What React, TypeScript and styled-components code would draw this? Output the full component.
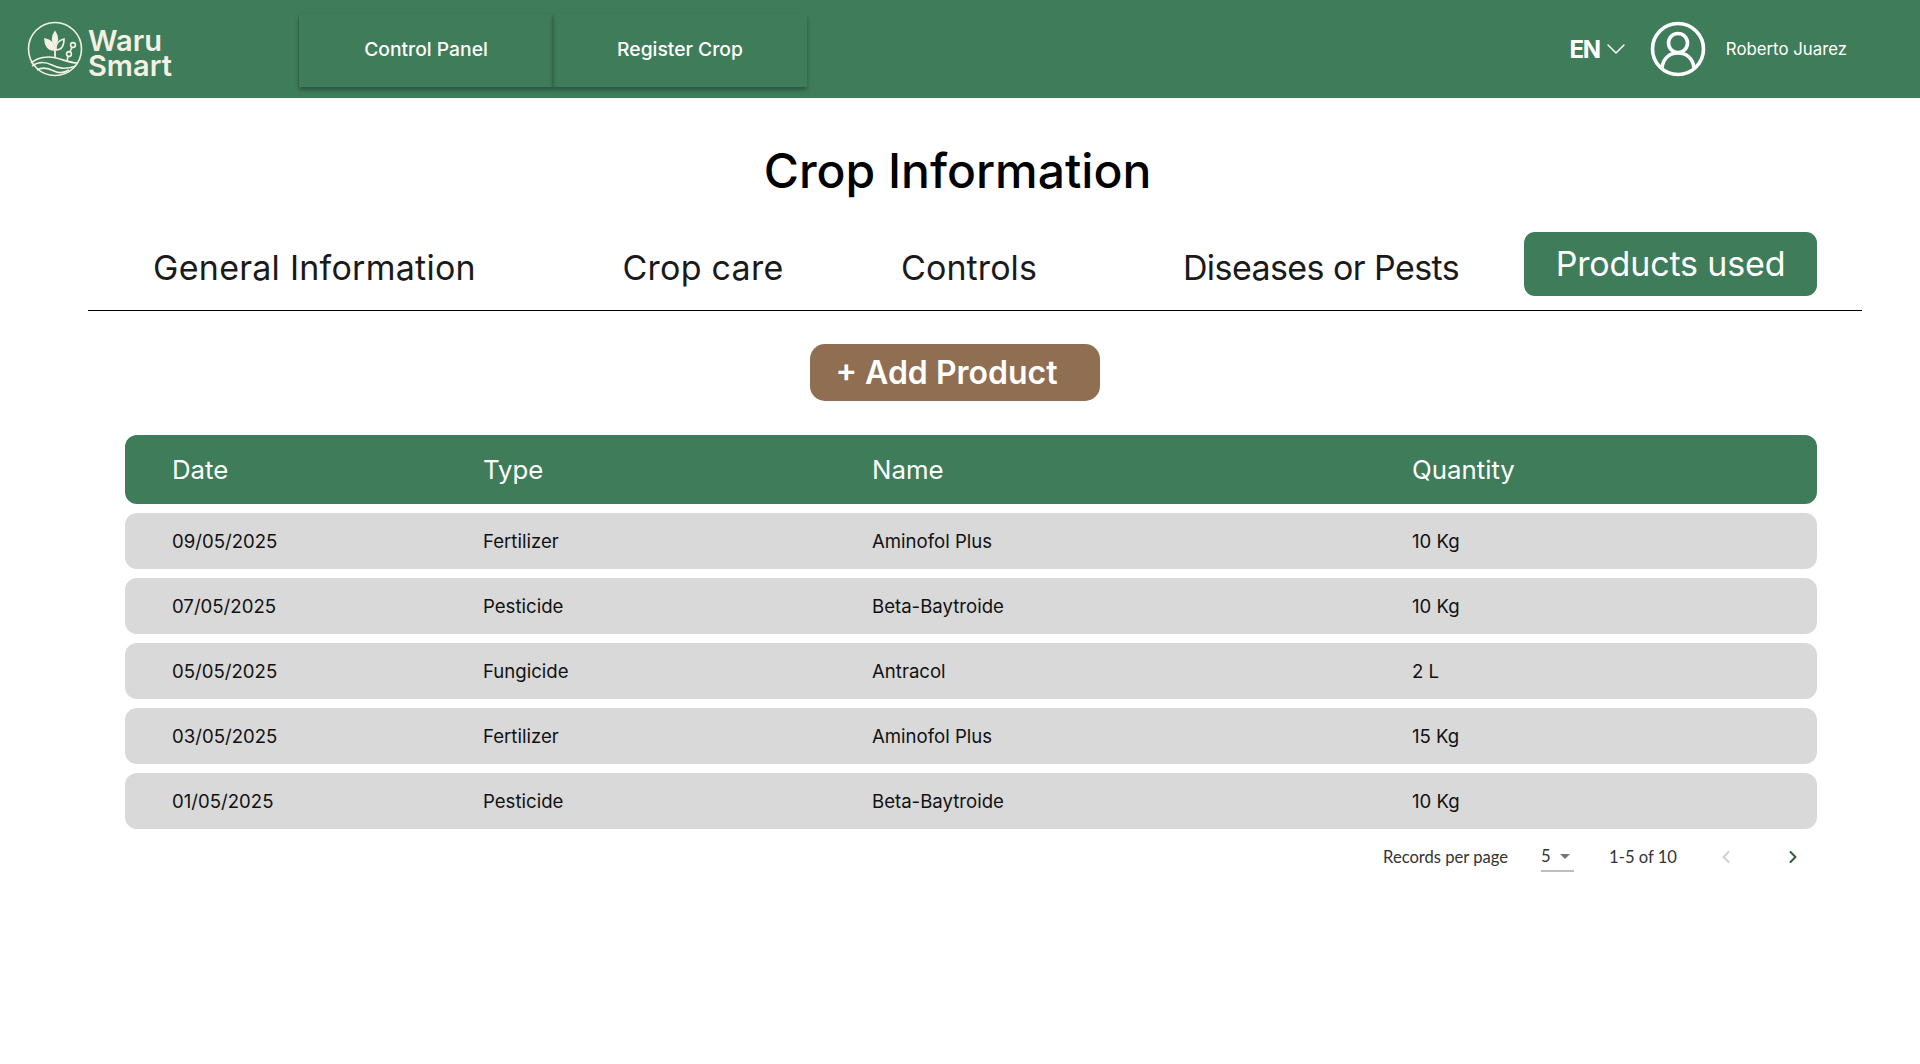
import React from "react";
import styled, { createGlobalStyle } from "styled-components";
import { ChevronDown, ChevronLeft, ChevronRight } from "lucide-react";

const GlobalStyle = createGlobalStyle`
  html, body {
    margin: 0;
    padding: 0;
    background: #fff;
    font-family: "Inter", "Liberation Sans", sans-serif;
  }
  * { box-sizing: border-box; }
`;

const Page = styled.div`
  width: 1920px;
  height: 1064px;
  background: #fff;
  overflow: hidden;
`;

const TopBar = styled.header`
  height: 98px;
  background: #3f7c5a;
  display: flex;
  align-items: flex-start;
  padding-left: 26px;
`;

const Brand = styled.div`
  width: 273px;
  height: 98px;
  display: flex;
  align-items: center;
  gap: 4px;
  color: #f3f0e4;
`;

const BrandName = styled.div`
  font-size: 29px;
  font-weight: 600;
  line-height: 25px;
  margin-top: 7px;
`;

const Nav = styled.nav`
  display: flex;
  margin-top: 14px;
`;

const NavItem = styled.a`
  width: 254px;
  height: 73px;
  padding-bottom: 4px;
  display: flex;
  align-items: center;
  justify-content: center;
  color: #fff;
  font-size: 19.300px;
  font-weight: 500;
  box-shadow: 0 3px 4px rgba(0, 0, 0, 0.3), -1px 0 1px rgba(0, 0, 0, 0.06);
`;

const UserArea = styled.div`
  margin-left: auto;
  height: 98px;
  display: flex;
  align-items: center;
  padding-right: 73px;
  color: #fff;
`;

const Lang = styled.div`
  display: flex;
  align-items: center;
  font-size: 24px;
  font-weight: 700;
  letter-spacing: -1.2px;
  margin-right: 18px;
`;

const UserName = styled.span`
  margin-left: 20px;
  font-size: 16.800px;
  font-weight: 400;
`;

const Main = styled.main`
  padding: 0 58px 0 88px;
`;

const Title = styled.h1`
  margin: 44px 0 0;
  padding-right: 35px;
  height: 58px;
  text-align: center;
  color: #000;
  font-size: 48px;
  line-height: 58px;
  font-weight: 500;
`;

const Tabs = styled.div`
  margin-top: 32px;
  height: 79px;
  display: flex;
  align-items: flex-start;
  border-bottom: 1px solid #000;
`;

const Tab = styled.div<{ $width: number; $gap?: number; $tracking?: number; $active?: boolean }>`
  width: ${(p) => p.$width}px;
  height: 64px;
  padding-bottom: 1px;
  margin-top: ${(p) => (p.$active ? 0 : 4)}px;
  margin-left: ${(p) => p.$gap ?? 0}px;
  display: flex;
  align-items: center;
  justify-content: center;
  border-radius: 11px;
  font-size: 34px;
  letter-spacing: ${(p) => p.$tracking ?? 0.25}px;
  background: ${(p) => (p.$active ? "#3f7c5a" : "transparent")};
  color: ${(p) => (p.$active ? "#fff" : "#1a1a1a")};
`;

const AddRow = styled.div`
  display: flex;
  justify-content: center;
  margin-top: 33px;
  padding-right: 41px;
`;

const AddButton = styled.button`
  width: 290px;
  height: 57px;
  padding: 0 0 0 26px;
  border: 0;
  border-radius: 15px;
  background: #8f6e52;
  color: #fff;
  font-family: "Inter", sans-serif;
  font-size: 32px;
  font-weight: 600;
  text-align: left;
`;

const TableWrap = styled.div`
  margin: 34px 45px 0 37px;
  display: flex;
  flex-direction: column;
  gap: 9px;
`;

const Columns = styled.div`
  display: grid;
  grid-template-columns: 311px 389px 540px 1fr;
  align-items: center;
  padding-left: 47px;
`;

const HeadRow = styled(Columns)`
  height: 69px;
  border-radius: 12px;
  background: #3f7c5a;
  color: #fff;
  font-size: 25.800px;
`;

const BodyRow = styled(Columns)`
  height: 56px;
  padding-bottom: 1px;
  border-radius: 12px;
  background: #d9d9d9;
  color: #111;
  font-size: 18.600px;
`;

const Pager = styled.div`
  margin: 13px 45px 0 0;
  height: 30px;
  display: flex;
  align-items: center;
  justify-content: flex-end;
  color: #333;
  font-family: "Lato", sans-serif;
  font-size: 16.600px;
`;

const PerPage = styled.div`
  width: 33px;
  height: 30px;
  margin: 0 35px 0 33px;
  display: flex;
  align-items: center;
  justify-content: space-between;
  padding-right: 4px;
  border-bottom: 2px solid #bdbdbd;
`;

const Caret = styled.span`
  width: 0;
  height: 0;
  border-left: 5px solid transparent;
  border-right: 5px solid transparent;
  border-top: 5px solid #777;
`;

const PagerButtons = styled.div`
  display: flex;
  align-items: center;
  gap: 47px;
  margin-left: 39px;
  margin-right: 14px;
`;

const rows = [
  ["09/05/2025", "Fertilizer", "Aminofol Plus", "10 Kg"],
  ["07/05/2025", "Pesticide", "Beta-Baytroide", "10 Kg"],
  ["05/05/2025", "Fungicide", "Antracol", "2 L"],
  ["03/05/2025", "Fertilizer", "Aminofol Plus", "15 Kg"],
  ["01/05/2025", "Pesticide", "Beta-Baytroide", "10 Kg"],
];

const Logo = () => (
  <svg width="58" height="58" viewBox="0 0 58 58" fill="none" stroke="#f3f0e4" strokeWidth="1.6">
    <circle cx="29" cy="29" r="26.500" />
    <path d="M5 43c7-6 17-7 25-5s15 5 21 5" />
    <path d="M6 46c7-5 14-4 20-1s12 5 24 1" />
    <path d="M11 50c5-3 11-2 17 1s10 2 15-1" />
    <path d="M29 37V20" strokeWidth="1.800" />
    <path d="M29 24c-3-2-3.500-7 0-12 3.500 5 3 10 0 12z" fill="#f3f0e4" />
    <path d="M28 30c-6 0-9-5-9-11 6 1 10 5 9 11z" fill="#f3f0e4" />
    <path d="M30 30c6 0 8-5 8-11-5 1-9 5-8 11z" />
    <circle cx="47" cy="25" r="2.400" />
    <circle cx="43" cy="34" r="2.400" />
    <path d="M46 27.500l-2 4M42 36.500L41 41" />
  </svg>
);

const UserIcon = () => (
  <svg width="56" height="56" viewBox="0 0 56 56" fill="none" stroke="#fff" strokeWidth="3.600">
    <circle cx="28" cy="28" r="25.500" />
    <circle cx="28" cy="22" r="9.500" />
    <path d="M12 47c1-10 8-15 16-15s15 5 16 15" />
  </svg>
);

const App = () => {
  return (
    <Page>
      <GlobalStyle />
      <TopBar>
        <Brand>
          <Logo />
          <BrandName>
            Waru
            <br />
            Smart
          </BrandName>
        </Brand>
        <Nav>
          <NavItem>Control Panel</NavItem>
          <NavItem>Register Crop</NavItem>
        </Nav>
        <UserArea>
          <Lang>
            EN <ChevronDown size={32} strokeWidth={1.1} />
          </Lang>
          <UserIcon />
          <UserName>Roberto Juarez</UserName>
        </UserArea>
      </TopBar>
      <Main>
        <Title>Crop Information</Title>
        <Tabs>
          <Tab $width={453}>General Information</Tab>
          <Tab $width={324}>Crop care</Tab>
          <Tab $width={208} $tracking={0.1}>
            Controls
          </Tab>
          <Tab $width={406} $gap={45} $tracking={-0.58}>
            Diseases or Pests
          </Tab>
          <Tab $width={293} $tracking={-0.15} $active>
            Products used
          </Tab>
        </Tabs>
        <AddRow>
          <AddButton>+ Add Product</AddButton>
        </AddRow>
        <TableWrap>
          <HeadRow>
            <span>Date</span>
            <span>Type</span>
            <span>Name</span>
            <span>Quantity</span>
          </HeadRow>
          {rows.map((r) => (
            <BodyRow key={r[0]}>
              {r.map((cell) => (
                <span key={cell}>{cell}</span>
              ))}
            </BodyRow>
          ))}
        </TableWrap>
        <Pager>
          <span>Records per page</span>
          <PerPage>
            5 <Caret />
          </PerPage>
          <span>1-5 of 10</span>
          <PagerButtons>
            <ChevronLeft size={20} strokeWidth={2.4} color="#d0d0d0" />
            <ChevronRight size={20} strokeWidth={2.4} color="#2f5d3a" />
          </PagerButtons>
        </Pager>
      </Main>
    </Page>
  );
};

export default App;
